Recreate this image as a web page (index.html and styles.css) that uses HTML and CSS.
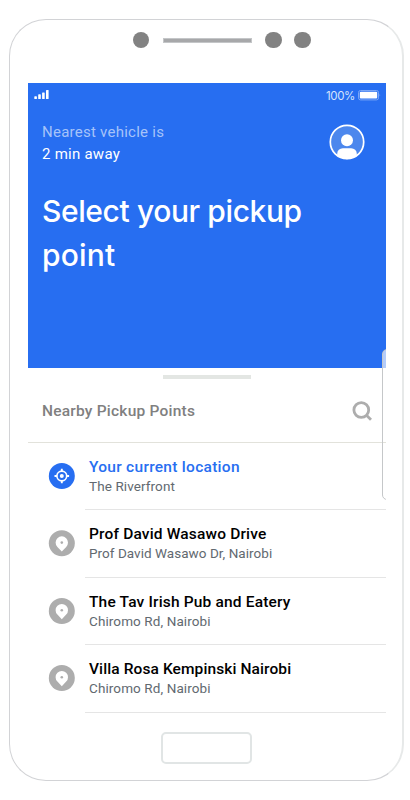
FILE: index.html
```html
<!DOCTYPE html>
<html lang="en">
<head>
<meta charset="utf-8">
<title>Select your pickup point</title>
<link rel="stylesheet" href="styles.css">
</head>
<body>
<div class="phone">
  <div class="sensors"><i class="lens"></i><i class="speaker"></i><i class="lens"></i><i class="lens last"></i></div>
  <main class="screen">
    <section class="hero">
      <div class="status">
        <svg class="signal" width="15" height="10" viewBox="0 0 15 10" fill="#fff"><rect x=".3" y="6.3" width="2.6" height="2.8" rx=".6"/><rect x="4.2" y="4.3" width="2.6" height="4.8" rx=".6"/><rect x="8.1" y="2.5" width="2.6" height="6.6" rx=".6"/><rect x="12" y="0" width="2.6" height="9.1" rx=".6"/></svg>
        <span class="percent">100%</span>
        <svg class="battery" width="23" height="11" viewBox="0 0 23 11"><rect x=".5" y=".5" width="20" height="9.4" rx="2" fill="none" stroke="#7aa6f7"/><rect x="1.8" y="1.8" width="17.4" height="6.8" rx="1" fill="#fff"/><path d="M21.7 3.8q1 1.4 0 2.8z" fill="#8fb4f8"/></svg>
      </div>
      <div class="top">
        <p class="eta"><span class="nearest">Nearest vehicle is</span><br><span class="minutes">2 min away</span></p>
        <svg class="avatar" width="36" height="36" viewBox="0 0 36 36"><circle cx="18" cy="18" r="16.7" fill="#4c87ed"/><circle cx="18" cy="16.3" r="6" fill="#fff"/><path d="M8.2 32v-2.2a5.6 5.6 0 0 1 5.6-5.6h8.4a5.6 5.6 0 0 1 5.6 5.6V32Q18 38.5 8.2 32z" fill="#fff"/><circle cx="18" cy="18" r="16.7" fill="none" stroke="#fff" stroke-width="1.7"/></svg>
      </div>
      <h1>Select your pickup<br><span class="wide">point</span></h1>
    </section>
    <i class="handle"></i>
    <header class="nearby"><h2>Nearby Pickup Points</h2>
      <svg width="20" height="20" viewBox="0 0 20 20" fill="none" stroke="#adadad" stroke-width="2.8"><circle cx="9.3" cy="9" r="7.4"/><path d="M14.2 14l4.8 4.7"/></svg>
    </header>
    <ul>
      <li class="current"><svg class="icon" width="27" height="27" viewBox="0 0 27 27"><circle cx="13.8" cy="13" r="13" fill="#276ef1"/><g transform="translate(.3 -.5)"><circle cx="13.5" cy="13.5" r="4.9" fill="none" stroke="#fff" stroke-width="1.6"/><path d="M13.5 6.2v2.6m0 9.4v2.6M6.2 13.5h2.6m9.4 0h2.6" stroke="#fff" stroke-width="1.9"/><circle cx="13.5" cy="13.5" r="2" fill="#fff"/></g></svg><div class="place"><h3>Your current location</h3><p class="a1">The Riverfront</p></div></li>
      <li><svg class="icon" width="27" height="27" viewBox="0 0 27 27"><circle cx="13.8" cy="13.3" r="13" fill="#adadad"/><path d="M13.8 21.5l-4.4-4.6a6.2 6.2 0 1 1 8.8 0z" fill="#fff"/><circle cx="13.8" cy="12.6" r="1.3" fill="#adadad"/></svg><div class="place"><h3 class="t2">Prof David Wasawo Drive</h3><p class="a2">Prof David Wasawo Dr, Nairobi</p></div></li>
      <li><svg class="icon" width="27" height="27" viewBox="0 0 27 27"><circle cx="13.8" cy="13" r="13" fill="#adadad"/><path d="M13.8 21.2l-4.4-4.6a6.2 6.2 0 1 1 8.8 0z" fill="#fff"/><circle cx="13.8" cy="12.3" r="1.3" fill="#adadad"/></svg><div class="place"><h3 class="t3">The Tav Irish Pub and Eatery</h3><p>Chiromo Rd, Nairobi</p></div></li>
      <li><svg class="icon" width="27" height="27" viewBox="0 0 27 27"><circle cx="13.8" cy="13" r="13" fill="#adadad"/><path d="M13.8 21.2l-4.4-4.6a6.2 6.2 0 1 1 8.8 0z" fill="#fff"/><circle cx="13.8" cy="12.3" r="1.3" fill="#adadad"/></svg><div class="place"><h3 class="t4">Villa Rosa Kempinski Nairobi</h3><p>Chiromo Rd, Nairobi</p></div></li>
    </ul>
    <i class="edge"></i>
  </main>
  <div class="home"></div>
</div>
</body>
</html>
```
FILE: styles.css
```css
* { box-sizing: border-box; margin: 0; padding: 0; }
body { background: #fff; padding: 19px 0 0 9px; font-family: Roboto, sans-serif; }
svg, i { display: block; flex: none; }
.phone { width: 395px; height: 762px; border: 1px solid #d2d3d6; border-right: 2px solid #e7e9e9; border-radius: 37px; padding: 0 17px 0 18px; }
.sensors { height: 63px; display: flex; align-items: center; padding: 0 0 23px 104.5px; }
.lens { width: 16.5px; height: 16.5px; border-radius: 50%; background: #828282; }
.speaker { width: 89px; height: 5px; margin: 0 13px 0 14px; background: #a7a8aa; border: 1px solid #c4c6c8; }
.last { margin-left: 12.5px; }
.screen { position: relative; width: 358px; height: 630px; overflow: hidden; }
.hero { height: 285px; background: #276ef1; color: #fff; }
.status { height: 25px; display: flex; align-items: flex-start; padding: 7px 5px 0 6px; }
.percent { margin: -1px 3px 0 auto; font: 11.5px/14px Inter, sans-serif; color: #d5e3fc; letter-spacing: -.35px; }
.top { display: flex; justify-content: space-between; padding: 13px 21px 0 14px; height: 74px; }
.eta { font-size: 15px; line-height: 22px; white-space: nowrap; letter-spacing: .25px; }
.nearest { color: #a6c3f9; }
.avatar { margin-top: 3px; }
h1 { padding: 8px 14px 0; font: 500 30px/43.5px Inter, sans-serif; letter-spacing: -.4px; white-space: nowrap; }
.wide { letter-spacing: .2px; }
.handle { width: 88px; height: 4px; margin: 7px 0 0 135px; background: #e3e6e3; }
.nearby { height: 64px; border-bottom: 1px solid #e2e2db; display: flex; align-items: center; justify-content: space-between; padding: 0 14px; }
h2 { font-size: 15.5px; font-weight: 500; color: #808080; white-space: nowrap; letter-spacing: .22px; }
ul { list-style: none; }
li { height: 67.4px; display: flex; padding-left: 20px; }
.icon { margin-top: 20px; }
.place { flex: 1; margin-left: 10px; padding: 14px 0 0 4px; border-bottom: 1px solid #e5e5e5; white-space: nowrap; }
h3 { font-size: 15.5px; font-weight: 500; line-height: 20px; color: #000; letter-spacing: .17px; }
.current h3 { color: #276ef1; letter-spacing: .28px; }
.t4 { letter-spacing: .1px; }
.place p { font-size: 13.5px; line-height: 19px; color: #626970; letter-spacing: .1px; }
.place .a2 { letter-spacing: .04px; }
.edge { position: absolute; right: -8px; top: 266px; width: 12px; height: 151px; border: 1px solid #c5c7c9; border-radius: 5px; background: linear-gradient(rgba(255,255,255,.65) 19px, transparent 19px); }
.home { width: 91px; height: 32px; margin: 19px 0 0 133px; border: 2px solid #e1e5e5; border-radius: 5px; }
```
